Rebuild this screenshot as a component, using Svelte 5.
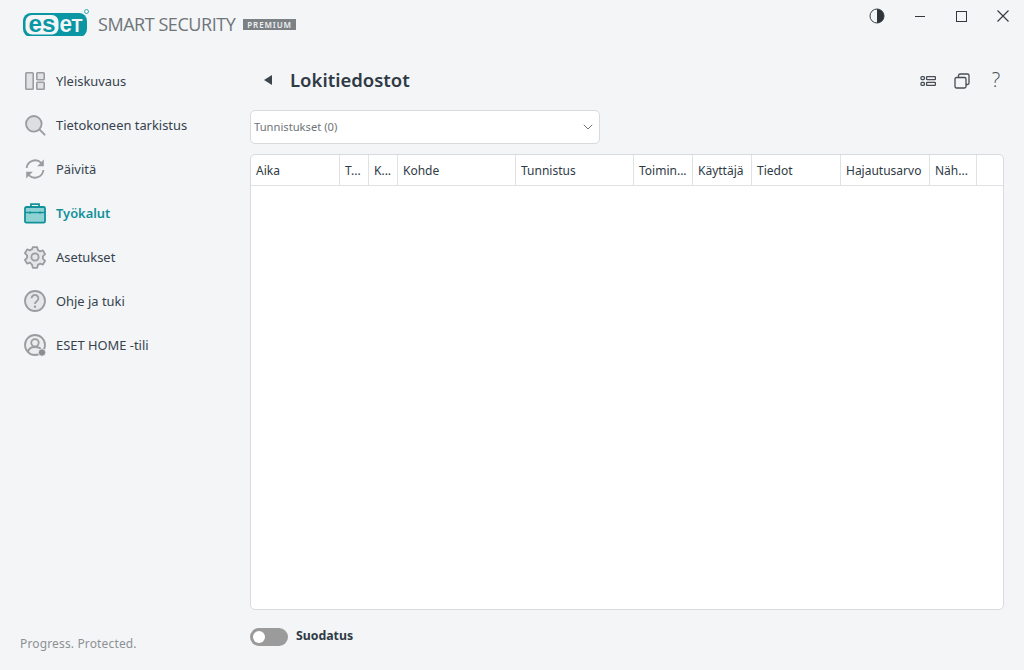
<script lang="ts">
	// ESET log files view: sidebar navigation, title row, dropdown and an empty table.
	const nav = [
		{ id: 'overview', label: 'Yleiskuvaus' },
		{ id: 'scan', label: 'Tietokoneen tarkistus' },
		{ id: 'update', label: 'Päivitä' },
		{ id: 'tools', label: 'Työkalut', active: true },
		{ id: 'setup', label: 'Asetukset' },
		{ id: 'help', label: 'Ohje ja tuki' },
		{ id: 'home', label: 'ESET HOME -tili' }
	];

	const columns = [
		{ label: 'Aika', w: 89 },
		{ label: 'T...', w: 29 },
		{ label: 'K...', w: 29 },
		{ label: 'Kohde', w: 118 },
		{ label: 'Tunnistus', w: 118 },
		{ label: 'Toimin...', w: 59 },
		{ label: 'Käyttäjä', w: 59 },
		{ label: 'Tiedot', w: 89 },
		{ label: 'Hajautusarvo', w: 89 },
		{ label: 'Näh...', w: 47 }
	];
</script>

<div class="app">
	<header class="titlebar">
		<div class="brand">
			<svg class="logo" width="70" height="28" viewBox="0 0 70 28">
				<rect x="1" y="5" width="64" height="24" rx="8" fill="#0a97a3" />
				<rect x="3.500" y="7" width="33" height="19.500" rx="6.500" fill="#f3f5f7" />
				<text x="6.500" y="23.500" class="logo-dark" textLength="27" lengthAdjust="spacingAndGlyphs">es</text>
				<text x="37.500" y="23.500" class="logo-light" textLength="12.500" lengthAdjust="spacingAndGlyphs">e</text>
				<text x="49.500" y="23.500" class="logo-t">T</text>
				<circle cx="64.500" cy="3.500" r="2" fill="none" stroke="#0a97a3" stroke-width="0.800" />
			</svg>
			<span class="product">SMART SECURITY</span>
			<span class="edition">PREMIUM</span>
		</div>
		<div class="window-controls">
			<svg width="16" height="16" viewBox="0 0 16 16">
				<circle cx="8" cy="8" r="7" fill="none" stroke="#3c4148" stroke-width="1" />
				<path d="M8 1a7 7 0 0 1 0 14z" fill="#2f343a" />
			</svg>
			<svg width="12" height="12" viewBox="0 0 12 12"><path d="M1 6.500h10" stroke="#33383e" /></svg>
			<svg width="12" height="12" viewBox="0 0 12 12">
				<rect x="1.500" y="1.500" width="10" height="10" fill="none" stroke="#33383e" />
			</svg>
			<svg width="14" height="14" viewBox="0 0 14 14">
				<path d="M1.500 1.500l11 11M12.500 1.500l-11 11" stroke="#33383e" stroke-width="1.100" />
			</svg>
		</div>
	</header>

	<div class="body">
		<aside class="sidebar">
			<nav>
				{#each nav as item}
					<div class="nav-item" class:active={item.active}>
						<svg class="nav-icon" width="24" height="24" viewBox="0 0 24 24">
							{#if item.id === 'overview'}
								<g fill="#e0e2e4" stroke="#9a9da0" stroke-width="1.600">
									<rect x="2.800" y="3.800" width="7.400" height="16.400" rx="0.800" />
									<rect x="13.800" y="3.800" width="7.400" height="7" rx="0.800" />
									<rect x="13.800" y="13.200" width="7.400" height="7" rx="0.800" />
								</g>
							{:else if item.id === 'scan'}
								<circle cx="10.800" cy="10.800" r="7.800" fill="#dcdee0" stroke="#9a9da0" stroke-width="1.800" />
								<path d="M16.600 16.600l5 5" stroke="#9a9da0" stroke-width="2" stroke-linecap="round" />
							{:else if item.id === 'update'}
								<g fill="none" stroke="#9a9da0" stroke-width="1.800">
									<path d="M3.600 11a8.600 8.600 0 0 1 14.600-5.200" />
									<path d="M20.400 13a8.600 8.600 0 0 1-14.600 5.200" />
								</g>
								<path d="M20.800 2.600v6.600h-6.600z" fill="#9a9da0" />
								<path d="M3.200 21.400v-6.600h6.600z" fill="#9a9da0" />
							{:else if item.id === 'tools'}
								<path d="M8 6V3.200h8V6" fill="none" stroke="#12919b" stroke-width="1.800" />
								<rect x="2" y="6" width="20" height="15.600" rx="1.400" fill="#8ed2d3" stroke="#12919b" stroke-width="1.800" />
								<path d="M2 11.500h20" stroke="#12919b" stroke-width="1.400" />
								<path d="M7 10.500v2.200M17 10.500v2.200" stroke="#12919b" stroke-width="1.400" />
							{:else if item.id === 'setup'}
								<path
									d="M9.800 2.200h4.400l.7 2.900 2.100 1.200 2.900-.9 2.200 3.800-2.200 2.100v2.400l2.200 2.100-2.200 3.800-2.900-.9-2.100 1.200-.7 2.900H9.800l-.7-2.900L7 17.700l-2.900.9-2.200-3.800 2.200-2.100v-2.400L1.900 8.200l2.200-3.800 2.900.9 2.100-1.200z"
									fill="#e3e5e7"
									stroke="#9a9da0"
									stroke-width="1.800"
									stroke-linejoin="round"
								/>
								<circle cx="12" cy="12" r="3.600" fill="none" stroke="#9a9da0" stroke-width="1.800" />
							{:else if item.id === 'help'}
								<circle cx="12" cy="12" r="10" fill="#e6e7e9" stroke="#9a9da0" stroke-width="1.800" />
								<path d="M8.600 9.300a3.400 3.400 0 1 1 5.200 2.900c-1.200.8-1.800 1.300-1.800 2.800" fill="none" stroke="#9a9da0" stroke-width="1.800" />
								<circle cx="12" cy="17.800" r="1.200" fill="#9a9da0" />
							{:else}
								<circle cx="12" cy="12" r="10" fill="#eceded" stroke="#9a9da0" stroke-width="1.800" />
								<circle cx="12" cy="9.800" r="3.700" fill="none" stroke="#9a9da0" stroke-width="1.800" />
								<path d="M5 19c.6-3.400 3.400-5 7-5s5.400 1 6 2.500" fill="none" stroke="#9a9da0" stroke-width="1.800" />
								<circle cx="19" cy="19.500" r="3.700" fill="#8b8e91" stroke="#f3f5f7" stroke-width="0.800" />
							{/if}
						</svg>
						<span>{item.label}</span>
					</div>
				{/each}
			</nav>
			<div class="tagline">Progress. Protected.</div>
		</aside>

		<main class="content">
			<div class="page-head">
				<div class="page-title">
					<svg width="10" height="12" viewBox="0 0 10 12"><path d="M9 1v10L1 6z" fill="#3c444c" /></svg>
					<h1>Lokitiedostot</h1>
				</div>
				<div class="page-tools">
					<svg width="16" height="14" viewBox="0 0 16 14">
						<g fill="none" stroke="#474d54" stroke-width="1.300">
							<rect x="1" y="2.600" width="3.400" height="3" rx="1" />
							<rect x="1" y="8.400" width="3.400" height="3" rx="1" />
							<rect x="6.600" y="2.600" width="8.800" height="3" rx="0.500" />
							<rect x="6.600" y="8.400" width="8.800" height="3" rx="0.500" />
						</g>
					</svg>
					<svg class="copy" width="16" height="16" viewBox="0 0 16 16">
						<g fill="none" stroke="#474d54" stroke-width="1.300">
							<path d="M4.500 4V2.500a1.500 1.500 0 0 1 1.500-1.500h7.500A1.500 1.500 0 0 1 15 2.500V10a1.500 1.500 0 0 1-1.500 1.500H12" />
							<rect x="1" y="4.500" width="11" height="10.500" rx="1.500" />
						</g>
					</svg>
					<span class="help">?</span>
				</div>
			</div>

			<div class="select">
				<span>Tunnistukset (0)</span>
				<svg width="10" height="6" viewBox="0 0 10 6"><path d="M.8.800L5 5l4.200-4.200" fill="none" stroke="#6f7479" /></svg>
			</div>

			<div class="table">
				<div class="thead">
					{#each columns as col}
						<div class="th" style="width: {col.w}px">{col.label}</div>
					{/each}
				</div>
			</div>

			<div class="filter">
				<div class="toggle"><div class="knob"></div></div>
				<span>Suodatus</span>
			</div>
		</main>
	</div>
</div>

<style>
	:global(body) {
		margin: 0;
		background: #f3f5f7;
	}
	.app {
		width: 1024px;
		height: 670px;
		display: flex;
		flex-direction: column;
		overflow: hidden;
		background: #f3f5f7;
		font-family: 'Noto Sans', 'Open Sans', sans-serif;
		font-size: 12.900px;
		color: #2f3a45;
	}
	.titlebar {
		height: 48px;
		flex: none;
		display: flex;
		justify-content: space-between;
		box-sizing: border-box;
	}
	.brand {
		display: flex;
		align-items: center;
		gap: 6px;
		padding: 0 0 0 22px;
		height: 48px;
	}
	.logo {
		margin-top: -4px;
		margin-right: -1px;
	}
	.logo-dark,
	.logo-light,
	.logo-t {
		font-family: 'Liberation Sans', sans-serif;
		font-weight: 700;
		font-size: 24px;
	}
	.logo-dark {
		fill: #0a97a3;
	}
	.logo-light,
	.logo-t {
		fill: #f3f5f7;
	}
	.logo-t {
		font-size: 18px;
	}
	.product {
		font-family: 'Open Sans', sans-serif;
		font-size: 18px;
		color: #6f7479;
		letter-spacing: -0.450px;
		margin-left: 1px;
	}
	.edition {
		background: #7c8186;
		color: #eef0f1;
		font-size: 8px;
		line-height: 11px;
		font-weight: 600;
		letter-spacing: 0.900px;
		padding: 0 4px;
		margin-left: 2px;
	}
	.window-controls {
		display: flex;
		align-items: center;
		gap: 29px;
		height: 16px;
		padding: 8px 14px 0 0;
	}
	.body {
		flex: 1;
		display: flex;
		min-height: 0;
	}
	.sidebar {
		width: 250px;
		flex: none;
		display: flex;
		flex-direction: column;
		justify-content: space-between;
		padding: 11px 0 18px 0;
		box-sizing: border-box;
	}
	.nav-item {
		height: 44px;
		display: flex;
		align-items: center;
		gap: 9px;
		padding-left: 23px;
		color: #37424d;
	}
	.nav-item.active {
		color: #12919b;
		font-weight: 600;
	}
	.tagline {
		padding-left: 20px;
		font-size: 12px;
		letter-spacing: 0.150px;
		color: #8d9194;
	}
	.content {
		flex: 1;
		display: flex;
		flex-direction: column;
		padding-right: 20px;
		min-width: 0;
	}
	.page-head {
		height: 62px;
		box-sizing: border-box;
		padding-top: 4px;
		display: flex;
		align-items: center;
		justify-content: space-between;
		flex: none;
	}
	.page-title {
		display: flex;
		align-items: center;
		gap: 17px;
		padding-left: 13px;
	}
	.page-title svg {
		margin-top: -2px;
	}
	h1 {
		margin: 0 0 3px;
		font-size: 18.500px;
		font-weight: 600;
		color: #2f3a45;
	}
	.page-tools {
		display: flex;
		align-items: center;
		gap: 18px;
		padding-right: 1px;
	}
	.copy {
		margin-right: 1px;
	}
	.help {
		font-size: 20px;
		line-height: 20px;
		color: #474d54;
		font-family: 'Open Sans', sans-serif;
		font-weight: 300;
		width: 14px;
		text-align: center;
		margin-bottom: 2px;
	}
	.select {
		width: 350px;
		height: 34px;
		box-sizing: border-box;
		flex: none;
		background: #fff;
		border: 1px solid #d8dadc;
		border-radius: 5px;
		display: flex;
		align-items: center;
		justify-content: space-between;
		padding: 0 6px 0 3px;
		font-size: 11.200px;
		color: #6f7479;
		margin-bottom: 10px;
	}
	.select span {
		margin-bottom: 1px;
	}
	.table {
		height: 456px;
		width: 754px;
		box-sizing: border-box;
		flex: none;
		background: #fff;
		border: 1px solid #d8dadc;
		border-radius: 5px;
	}
	.thead {
		display: flex;
		height: 31px;
		box-sizing: border-box;
		border-bottom: 1px solid #dfe1e3;
	}
	.th {
		box-sizing: border-box;
		border-right: 1px solid #dfe1e3;
		padding-left: 5px;
		line-height: 31px;
		font-size: 12px;
		white-space: nowrap;
		overflow: hidden;
		color: #2f3a45;
	}
	.filter {
		display: flex;
		align-items: center;
		gap: 8px;
		margin-top: 18px;
		font-size: 12.300px;
		font-weight: 700;
		color: #2f3a45;
	}
	.filter span {
		margin-top: -3px;
	}
	.toggle {
		width: 38px;
		height: 18px;
		border-radius: 9px;
		background: #9b9b9b;
		display: flex;
		align-items: center;
		padding-left: 3px;
		box-sizing: border-box;
	}
	.knob {
		width: 12px;
		height: 12px;
		border-radius: 50%;
		background: #fff;
	}
</style>
